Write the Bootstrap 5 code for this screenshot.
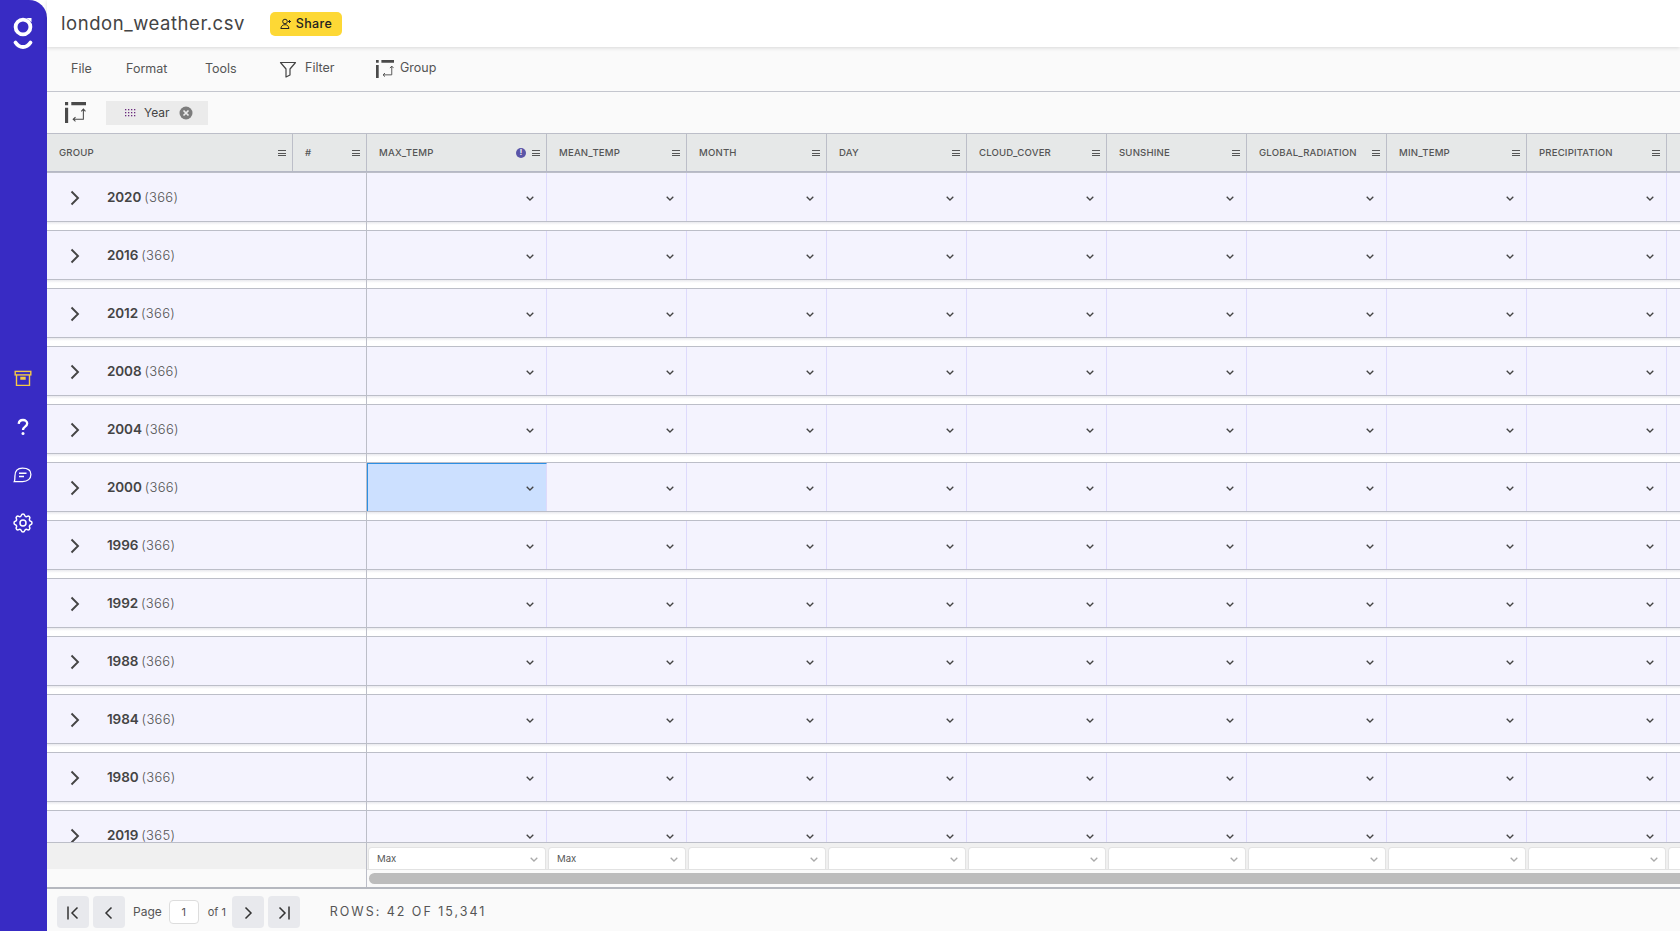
<!doctype html>
<html lang="en">
<head>
<meta charset="utf-8">
<title>london_weather.csv</title>
<link rel="stylesheet" href="https://cdn.jsdelivr.net/npm/bootstrap@5.3.0/dist/css/bootstrap.min.css">
<style>
html,body{height:100%;overflow:hidden;background:#fff}
body{font-family:"Inter","Noto Sans",sans-serif;color:#444}
.shell{height:931px;width:1680px;overflow:hidden}
.rail{width:47px;background:#382bc4;border-top-right-radius:18px;flex:none;padding-right:2px}
.rail-logo{height:56px}
.rail-tools{margin-top:299px}
.rail-slot{height:48px}
.stage{width:1633px;min-width:0}
.topstrip{height:47px;background:#fff;box-shadow:0 1px 4px rgba(0,0,0,.14);position:relative;z-index:2;padding-left:14px;flex:none}
.docname{font-size:18.5px;font-weight:400;letter-spacing:.55px;color:#444;width:209px}
.sharebtn{width:72px;height:24px;background:#fdd835;border:0;border-radius:5px;font-size:12.5px;font-weight:500;color:#222;padding:0;letter-spacing:.35px}
.sharetext{padding-top:1px}
.menustrip{height:45px;background:#fafafa;border-bottom:1px solid #c4c6ce;font-size:12.5px;color:#555;flex:none}
.menu-file{margin-left:24px;width:55px}.menu-format{width:79px}.menu-tools{width:74px}.menu-filter{width:97px}
.menu-lift{padding-bottom:2px}
.groupicon{margin-right:6px}
.groupstrip{height:41px;background:#fafafa;padding-left:18px;flex:none}
.chip{width:102px;height:24px;background:#ebebeb;margin-left:20px;font-size:12px;color:#444;padding-left:19px;padding-right:15px}
.gridhead{height:39px;background:#e6e8e8;border-top:1px solid #bcbec8;border-bottom:1px solid #b5b8c5;flex:none;font-size:9.6px;font-weight:500;color:#555;letter-spacing:.17px}
.hcell{flex:none;height:100%;padding:1px 6px 0 12px;border-right:1px solid #bcbec8}
.w-group{width:246px}.w-num{width:74px}.w-a{width:180px}.w-b{width:140px}.w-g2{width:320px}
.hbars{width:8px;height:6px;border-top:1px solid #555;border-bottom:1px solid #555;position:relative;flex:none}
.hbars::after{content:"";position:absolute;left:0;right:0;top:1.5px;height:1px;background:#555}
.infodot{width:10px;height:10px;border-radius:50%;background:#5a55a8;color:#fff;font-size:7px;font-weight:700;line-height:10px;text-align:center;margin-right:6px;flex:none}
.gridbody{height:670px;overflow:hidden;flex:none}
.datarow{height:50px;background:#f4f3fe;border-top:1px solid #bcbec8;border-bottom:1px solid #bcbec8}
.gapline{height:8px;background:linear-gradient(#e9e9ee 0,#fff 3px)}
.gapline>div{width:320px;height:100%;border-right:1px solid #bcbec8}
.gcell{flex:none;height:100%;border-right:1px solid #bcbec8;padding:1px 0 0 23px}
.vcell{flex:none;height:100%;border-right:1px solid #dedafc;padding:2px 12px 0 0}
.vcell.picked{background:#cce0ff;border-top:1px solid #2c8fe3;border-left:1px solid #2c8fe3}
.yearlabel{font-size:13.5px;font-weight:600;color:#444;margin-left:27px;letter-spacing:-.1px}
.yearcount{font-size:13px;font-weight:300;color:#555;margin-left:3px;letter-spacing:.3px}
.cellchev{color:#444;flex:none}
.boxchev{color:#aaa;flex:none}
.aggtop{height:27px;background:#f0f0f0;border-top:1px solid #bcbec8;flex:none}
.agg-left{height:100%;border-right:1px solid #bcbec8;width:320px;flex:none}
.agg-cell{flex:none;height:100%;padding:4px 1px 0}
.agg-box{height:100%;background:#fff;border:1px solid #e3e3e3;border-bottom:0;border-radius:4px 4px 0 0;font-size:9.6px;color:#555;padding:1px 7px 0 8px}
.aggscroll{height:18px;background:#fafafa;flex:none}
.agg-left2{width:320px;height:100%;border-right:1px solid #bcbec8;flex:none}
.scrolltrack{flex:1;border-top:1px solid #e2e2e2;padding:3px 0 0 2px}
.scrollthumb{height:11px;background:#bcbcbc;border-radius:6px 0 0 6px}
.pagerbar{height:44px;background:#fafafa;border-top:2px solid #b5b8bf;flex:none;padding:4px 0 0 10px;font-size:12px;color:#555}
.pgbtn{width:32px;height:32px;background:#e8e9ed;border:0;border-radius:4px;padding:0;margin-right:4px;flex:none}
.pglabel{margin:0 7px 0 4px}
.pgfield{width:30px;height:24px;border:1px solid #ddd;border-radius:4px;background:#fff;font-size:11px}
.pgof{margin:0 6px 0 9px;width:18px;white-space:nowrap;font-size:11px}
.rowcount{margin-left:26px;font-size:12.5px;letter-spacing:1.98px;color:#555}
</style>
</head>
<body>
<svg width="0" height="0" class="position-absolute">
  <symbol id="groupglyph" viewBox="0 0 20 20"><path d="M0 0h3v3H0zM0 5.500h3V20H0zM6 0h14v3H6z" fill="#4a4a4a"/><path d="M17.500 7v9.500H8M15.500 9l2-2.200 2 2.200M10 14.500l-2.200 2 2.200 2" fill="none" stroke="#4a4a4a" stroke-width="1"/></symbol>
  <symbol id="chev" viewBox="0 0 8 5"><path d="M.7.7 4 4l3.300-3.300" fill="none" stroke="currentColor" stroke-width="1.300"/></symbol>
</svg>
<div class="shell d-flex">
  <aside class="rail d-flex flex-column align-items-center">
    <div class="rail-logo d-flex justify-content-center">
      <svg width="34" height="56" viewBox="0 0 34 56"><circle cx="17" cy="27" r="7.400" fill="none" stroke="#fff" stroke-width="3.800"/><path d="M20.500 18h5v4.300z" fill="#fff"/><path d="M9.500 42.500c4 6 11 6 15 0" fill="none" stroke="#fff" stroke-width="3.800" stroke-linecap="round"/></svg>
    </div>
    <div class="rail-tools d-flex flex-column">
      <div class="rail-slot d-flex align-items-center justify-content-center">
        <svg width="18" height="18" viewBox="0 0 18 18" fill="none" stroke="#f6c945" stroke-width="1.400"><rect x="1.200" y="1.400" width="15.600" height="3.500"/><path d="M2.500 4.900V15.400h13V4.900"/><path d="M7 7.500h4V9H7z" fill="#f6c945"/></svg>
      </div>
      <div class="rail-slot d-flex align-items-center justify-content-center">
        <svg width="14" height="18" viewBox="0 0 14 18" fill="none" stroke="#fff" stroke-width="2.300"><path d="M2.700 5.800C2.900 3.300 4.700 2 7 2c2.400 0 4.200 1.500 4.200 3.600 0 3.100-4.200 3-4.200 6.300"/><circle cx="7" cy="15.400" r="1.500" fill="#fff" stroke="none"/></svg>
      </div>
      <div class="rail-slot d-flex align-items-center justify-content-center">
        <svg width="19" height="16" viewBox="0 0 19 16" fill="none" stroke="#fff" stroke-width="1.300"><path d="M1.200 14.700c.8-1.800.7-3.200.7-5.500C1.900 4 4.500 1.200 9.500 1.200c5.300 0 8.400 2.500 8.400 6.200 0 4.200-3.400 7-8.200 7.200z"/><path d="M6 6.200h7.500M6 9.600h5" stroke-width="1.500"/></svg>
      </div>
      <div class="rail-slot d-flex align-items-center justify-content-center">
        <svg width="24" height="24" viewBox="0 0 24 24" fill="none" stroke="#fff" stroke-width="1.500"><path d="M10.325 4.317c.426-1.756 2.924-1.756 3.350 0a1.724 1.724 0 0 0 2.573 1.066c1.543-.94 3.310.826 2.370 2.370a1.724 1.724 0 0 0 1.065 2.572c1.756.426 1.756 2.924 0 3.350a1.724 1.724 0 0 0-1.066 2.573c.94 1.543-.826 3.310-2.370 2.370a1.724 1.724 0 0 0-2.572 1.065c-.426 1.756-2.924 1.756-3.350 0a1.724 1.724 0 0 0-2.573-1.066c-1.543.94-3.310-.826-2.370-2.370a1.724 1.724 0 0 0-1.065-2.572c-1.756-.426-1.756-2.924 0-3.350a1.724 1.724 0 0 0 1.066-2.573c-.94-1.543.826-3.310 2.370-2.370 1 .608 2.296.07 2.572-1.065z"/><circle cx="12" cy="12" r="3"/></svg>
      </div>
    </div>
  </aside>
  <main class="stage d-flex flex-column">
    <header class="topstrip d-flex align-items-center">
      <div class="docname">london_weather.csv</div>
      <button class="sharebtn d-flex align-items-center justify-content-center gap-1" type="button">
        <svg width="12" height="12" viewBox="0 0 12 12" fill="none" stroke="#222" stroke-width="1"><circle cx="5" cy="3.500" r="2.300"/><path d="M.8 10.500c.5-2.600 2-3.800 4.200-3.800s3.400 1 4 3.800zM9.500 2v3M8 3.500h3"/></svg>
        <span class="sharetext">Share</span>
      </button>
    </header>
    <nav class="menustrip d-flex align-items-center">
      <span class="menu-file">File</span><span class="menu-format">Format</span><span class="menu-tools">Tools</span>
      <span class="menu-filter d-flex align-items-center gap-2">
        <svg width="18" height="18" viewBox="0 0 18 18" fill="none" stroke="#444" stroke-width="1.200"><path d="M1.500 2.500h15L11 9v6l-4 2V9z" stroke-linejoin="round"/></svg><span class="menu-lift">Filter</span></span>
      <span class="d-flex align-items-center"><svg class="groupicon" width="18" height="18"><use href="#groupglyph"/></svg><span class="menu-lift">Group</span></span>
    </nav>
    <section class="groupstrip d-flex align-items-center">
      <svg width="21" height="21"><use href="#groupglyph"/></svg>
      <div class="chip d-flex align-items-center">
        <svg width="11" height="8" viewBox="0 0 11 8" fill="#6b2a7d"><g id="dotset"><rect x="0" y="0" width="1.300" height="1.300"/><rect x="3" y="0" width="1.300" height="1.300"/><rect x="6" y="0" width="1.300" height="1.300"/><rect x="9" y="0" width="1.300" height="1.300"/></g><use href="#dotset" y="3"/><use href="#dotset" y="6"/></svg>
        <span class="ms-2">Year</span>
        <svg class="ms-auto" width="14" height="14" viewBox="0 0 14 14"><circle cx="7" cy="7" r="6.500" fill="#7d7d7d"/><path d="m4.500 4.500 5 5m0-5-5 5" stroke="#ebebeb" stroke-width="1.700"/></svg>
      </div>
    </section>
    <div class="gridhead d-flex" id="gridhead"></div>
    <div class="gridbody" id="gridbody"></div>
    <div class="aggtop d-flex" id="aggtop"></div>
    <div class="aggscroll d-flex"><div class="agg-left2"></div><div class="scrolltrack"><div class="scrollthumb"></div></div></div>
    <footer class="pagerbar d-flex align-items-center">
      <button class="pgbtn" type="button"><svg width="16" height="16" viewBox="0 0 16 16" fill="none" stroke="#333" stroke-width="1.500"><path d="M3 1.500v13M12.500 2.500 7 8l5.500 5.500"/></svg></button>
      <button class="pgbtn" type="button"><svg width="16" height="16" viewBox="0 0 16 16" fill="none" stroke="#333" stroke-width="1.500"><path d="M10.500 2.500 5 8l5.500 5.500"/></svg></button>
      <span class="pglabel">Page</span>
      <span class="pgfield d-flex align-items-center justify-content-center">1</span>
      <span class="pgof">of 1</span>
      <button class="pgbtn" type="button"><svg width="16" height="16" viewBox="0 0 16 16" fill="none" stroke="#333" stroke-width="1.500"><path d="M5.500 2.500 11 8l-5.500 5.500"/></svg></button>
      <button class="pgbtn" type="button"><svg width="16" height="16" viewBox="0 0 16 16" fill="none" stroke="#333" stroke-width="1.500"><path d="M13 1.500v13M3.500 2.500 9 8l-5.500 5.500"/></svg></button>
      <span class="rowcount">ROWS: 42 OF 15,341</span>
    </footer>
  </main>
</div>
<script>
var cols=['MAX_TEMP','MEAN_TEMP','MONTH','DAY','CLOUD_COVER','SUNSHINE','GLOBAL_RADIATION','MIN_TEMP','PRECIPITATION',''];
var years=[['2020',366],['2016',366],['2012',366],['2008',366],['2004',366],['2000',366],['1996',366],['1992',366],['1988',366],['1984',366],['1980',366],['2019',365]];
function w(i){return i==0?'w-a':'w-b'}
var chev='<svg class="cellchev" width="8" height="5"><use href="#chev"/></svg>';
var h='<div class="hcell w-group d-flex align-items-center"><span class="flex-grow-1">GROUP</span><span class="hbars"></span></div>'+
'<div class="hcell w-num d-flex align-items-center"><span class="flex-grow-1">#</span><span class="hbars"></span></div>';
cols.forEach(function(c,i){h+='<div class="hcell '+w(i)+' d-flex align-items-center"><span class="flex-grow-1">'+c+'</span>'+(i==0?'<span class="infodot">!</span>':'')+'<span class="hbars"></span></div>'});
document.getElementById('gridhead').innerHTML=h;
var b='';
years.forEach(function(y,r){
  b+='<div class="datarow d-flex"><div class="gcell w-g2 d-flex align-items-center"><svg width="10" height="16" viewBox="0 0 10 16" fill="none" stroke="#444" stroke-width="1.900"><path d="M1.500 1.500 8 8l-6.500 6.500"/></svg><span class="yearlabel">'+y[0]+'</span><span class="yearcount">('+y[1]+')</span></div>';
  cols.forEach(function(c,i){b+='<div class="vcell '+w(i)+(r==5&&i==0?' picked':'')+' d-flex align-items-center justify-content-end">'+chev+'</div>'});
  b+='</div><div class="gapline"><div></div></div>';
});
document.getElementById('gridbody').innerHTML=b;
var a='<div class="agg-left"></div>';
cols.forEach(function(c,i){a+='<div class="agg-cell '+w(i)+'"><div class="agg-box d-flex align-items-center justify-content-between"><span>'+(i<2?'Max':'')+'</span><svg class="boxchev" width="8" height="5"><use href="#chev"/></svg></div></div>'});
document.getElementById('aggtop').innerHTML=a;
</script>
<script src="https://cdn.jsdelivr.net/npm/bootstrap@5.3.0/dist/js/bootstrap.bundle.min.js"></script>
</body>
</html>
